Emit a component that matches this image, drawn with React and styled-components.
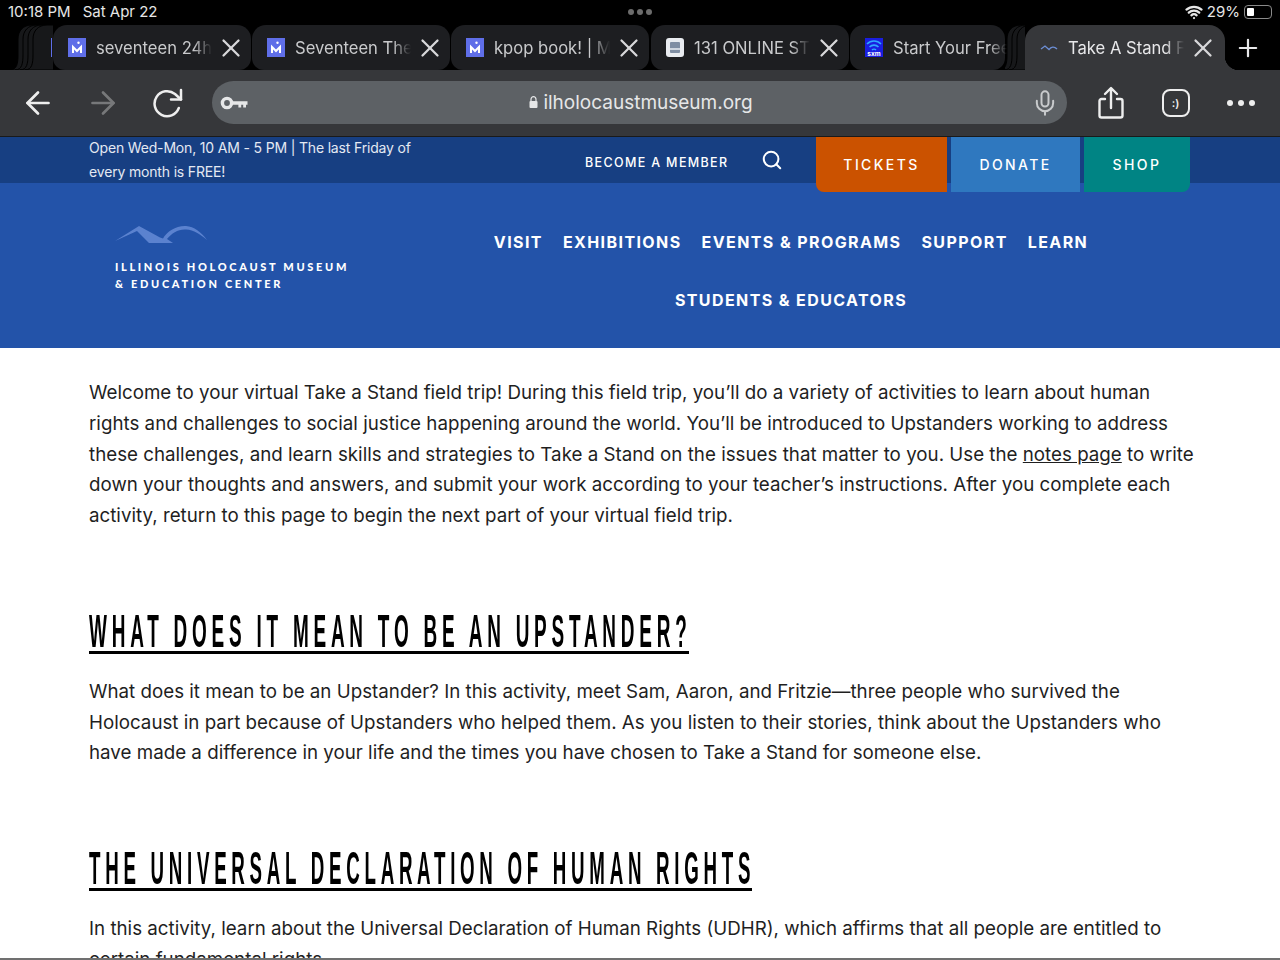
import React from 'react';
import styled, { createGlobalStyle } from 'styled-components';
import { X, Plus, ArrowLeft, ArrowRight, Mic, Search, Wifi } from 'lucide-react';

const GlobalStyle = createGlobalStyle`
  html, body {
    margin: 0;
    padding: 0;
    height: 960px;
    overflow: hidden;
    background: #fff;
  }
  * {
    box-sizing: border-box;
  }
`;

const Page = styled.div`
  width: 1280px;
  height: 960px;
  overflow: hidden;
  border-bottom: 2px solid #707070;
  font-family: 'Inter', 'Liberation Sans', sans-serif;
`;

const StatusBar = styled.div`
  display: grid;
  grid-template-columns: 1fr auto 1fr;
  align-items: center;
  height: 25px;
  padding: 0 8px 2px;
  background: #000;
  color: #e6e6e6;
  font-size: 15px;
`;

const Clock = styled.div`
  display: flex;
  gap: 12px;
`;

const Dots = styled.div`
  display: flex;
  gap: 3px;
`;

const Dot = styled.span`
  width: ${(p) => p.$size}px;
  height: ${(p) => p.$size}px;
  border-radius: 50%;
  background: ${(p) => p.$color};
`;

const StatusRight = styled.div`
  display: flex;
  align-items: center;
  justify-content: flex-end;
  gap: 4px;
`;

const Battery = styled.div`
  width: 28px;
  height: 14px;
  padding: 2px;
  border: 1px solid #8a8a8a;
  border-radius: 4px;

  &::before {
    content: '';
    display: block;
    width: 7px;
    height: 100%;
    background: #fff;
    border-radius: 1px;
  }
`;

const TabStrip = styled.div`
  display: flex;
  align-items: stretch;
  height: 45px;
  background: #000;
`;

const Tab = styled.div`
  position: relative;
  display: flex;
  align-items: center;
  flex: none;
  width: ${(p) => p.$width}px;
  margin-right: ${(p) => p.$gap || 0}px;
  padding-left: 15px;
  background: ${(p) => (p.$active ? '#36373a' : '#1d1e21')};
  border-radius: ${(p) => (p.$active ? '16px 16px 0 0' : '14px 14px 12px 12px')};
  color: ${(p) => (p.$active ? '#e8e8ea' : '#c9cacc')};

  ${(p) =>
    p.$active &&
    `
    &::after {
      content: '';
      position: absolute;
      left: 100%;
      bottom: 0;
      width: 14px;
      height: 14px;
      background: radial-gradient(circle at 100% 0, transparent 14px, #36373a 14.5px);
    }
  `}
`;

const Favicon = styled.span`
  display: flex;
  flex: none;
  align-items: center;
  justify-content: center;
  width: 18px;
  height: 19px;
  border-radius: ${(p) => p.$radius || 0}px;
  background: ${(p) => p.$bg || 'transparent'};
`;

const TabTitle = styled.span`
  flex: none;
  width: ${(p) => p.$width}px;
  margin-left: 10px;
  overflow: hidden;
  white-space: nowrap;
  font-size: 16.6px;
  -webkit-mask-image: linear-gradient(to right, #000 84%, transparent 100%);
  mask-image: linear-gradient(to right, #000 84%, transparent 100%);
`;

const CloseButton = styled(X)`
  flex: none;
  margin-left: 4px;
  color: #d8d8da;
`;

const PeekBar = styled.span`
  position: absolute;
  left: -2px;
  top: 13px;
  width: 1px;
  height: 19px;
  background: #5f6ee8;
`;

const NewTab = styled.div`
  display: flex;
  flex: 1;
  align-items: center;
  justify-content: center;
  padding-right: 10px;
  color: #e8e8ea;
`;

const Toolbar = styled.div`
  display: flex;
  align-items: center;
  height: 67px;
  padding-left: 5px;
  padding-bottom: 1px;
  background: #36373a;
  border-bottom: 1px solid #1a1a1a;
`;

const ToolButton = styled.div`
  display: flex;
  flex: none;
  align-items: center;
  justify-content: center;
  width: 65px;
  color: ${(p) => (p.$dim ? '#77787a' : '#eeeeee')};
`;

const UrlBar = styled.div`
  display: grid;
  grid-template-columns: 1fr auto 1fr;
  align-items: center;
  flex: none;
  width: 855px;
  height: 43px;
  margin: 0 11px 0 12px;
  padding: 0 8px;
  border-radius: 22px;
  background: #5d6165;
  color: #e6e7e8;
  font-size: 19px;
`;

const UrlText = styled.div`
  display: flex;
  align-items: center;
  gap: 5px;
  margin: -1px 0 0 3px;
`;

const MicSlot = styled.div`
  display: flex;
  justify-content: flex-end;
  color: #c9cbcd;
`;

const TabCount = styled.div`
  display: flex;
  align-items: center;
  justify-content: center;
  width: 28px;
  height: 28px;
  border: 2px solid #eee;
  border-radius: 8px;
  font-size: 11px;
  font-weight: 600;
`;

const MoreDots = styled.div`
  display: flex;
  gap: 5px;
`;

const TopBar = styled.div`
  position: relative;
  z-index: 1;
  display: flex;
  height: 46px;
  background: #173f82;
  color: #fff;
`;

const Hours = styled.div`
  width: 496px;
  margin-left: 89px;
  margin-top: -1px;
  font-size: 14px;
  letter-spacing: -0.17px;
  line-height: 24px;
  color: #e4e9f2;
`;

const MemberLink = styled.a`
  width: 176px;
  font-size: 12.5px;
  font-weight: 500;
  letter-spacing: 1.35px;
  line-height: 52px;
  white-space: nowrap;
`;

const SearchSlot = styled.div`
  display: flex;
  width: 55px;
  padding-top: 12px;
`;

const CtaButton = styled.a`
  display: flex;
  align-items: center;
  justify-content: center;
  flex: none;
  width: ${(p) => p.$width}px;
  height: 55px;
  margin-right: 4px;
  background: ${(p) => p.$bg};
  border-radius: ${(p) => p.$radius || '0'};
  font-size: 14px;
  font-weight: 500;
  letter-spacing: 2.4px;
`;

const SiteHeader = styled.header`
  display: flex;
  height: 165px;
  padding-left: 115px;
  background: #2353a9;
  color: #fff;
`;

const LogoBlock = styled.div`
  flex: none;
  width: 356px;
  padding-top: 42px;
`;

const LogoMark = styled.svg`
  display: block;
  width: 92px;
  height: 20px;
`;

const LogoText = styled.div`
  margin-top: 13px;
  font-family: 'Lato', 'Liberation Sans', sans-serif;
  font-size: 11px;
  font-weight: 900;
  letter-spacing: 2.68px;
  line-height: 17px;
  white-space: nowrap;
`;

const MainNav = styled.nav`
  display: flex;
  flex-wrap: wrap;
  align-content: flex-start;
  justify-content: center;
  column-gap: 20px;
  width: 640px;
  padding-top: 30px;
`;

const NavLink = styled.a`
  font-size: 16px;
  font-weight: 700;
  letter-spacing: 1.4px;
  line-height: 58px;
  white-space: nowrap;
`;

const Content = styled.main`
  padding: 30px 0 0 89px;
  background: #fff;
  color: #1f1f1f;
`;

const Para = styled.p`
  margin: 0;
  font-size: 18.75px;
  line-height: 30.75px;
  white-space: nowrap;

  a {
    color: inherit;
    text-decoration: underline;
  }
`;

const Heading = styled.h2`
  width: ${(p) => p.$width}px;
  height: 43px;
  margin: 79px 0 23px;
  border-bottom: 3px solid #000;
  font-family: 'Liberation Sans', sans-serif;
  font-size: 46px;
  font-weight: 700;
  line-height: 40px;
  white-space: nowrap;
  color: #000;

  span {
    display: block;
    transform: scaleX(${(p) => p.$squeeze});
    transform-origin: left center;
    letter-spacing: 11.6px;
  }
`;

const MediumFavicon = () => (
  <Favicon $bg="#5f6ee8">
    <svg width="12" height="13" viewBox="0 0 12 13" fill="none" stroke="#fff" strokeWidth="2">
      <path d="M2 12V6l4 4 4-4v6" />
      <circle cx="7.500" cy="1.800" r="1.200" fill="#fff" stroke="none" />
    </svg>
  </Favicon>
);

const ReloadIcon = () => (
  <svg width="30" height="30" viewBox="0 0 30 30" fill="none" stroke="#eee" strokeWidth="2.500" strokeLinecap="round" strokeLinejoin="round">
    <path d="M25.800 20a12.500 12.500 0 1 1-3.800-14l6 5.500" />
    <path d="M28 2v9.500H18" />
  </svg>
);

const ShareIcon = () => (
  <svg width="28" height="34" viewBox="0 0 28 34" fill="none" stroke="#eee" strokeWidth="2.400" strokeLinecap="round" strokeLinejoin="round">
    <path d="M8 13H4.500a2 2 0 0 0-2 2v14.500a2 2 0 0 0 2 2h19a2 2 0 0 0 2-2V15a2 2 0 0 0-2-2H20" />
    <path d="M14 22V2.500M8 8l6-6 6 6" />
  </svg>
);

const KeyIcon = () => (
  <svg width="28" height="14" viewBox="0 0 28 14" fill="none">
    <circle cx="7" cy="7" r="4.600" stroke="#e6e7e8" strokeWidth="3.400" />
    <path d="M12 5.200h15.500v3.600H26v2.600h-2.800V8.800h-2v2.600h-2.800V8.800H12z" fill="#e6e7e8" />
  </svg>
);

const LockIcon = () => (
  <svg width="9" height="12" viewBox="0 0 9 12">
    <path d="M2 5V3.200a2.500 2.500 0 0 1 5 0V5" fill="none" stroke="#e6e7e8" strokeWidth="1.200" />
    <rect x="0.500" y="5" width="8" height="7" rx="1" fill="#e6e7e8" />
  </svg>
);

// stacked tab edges behind the first tab and the active tab
const TabStack = ({ width, count, start }) => (
  <svg width={width} height="45" viewBox={`0 0 ${width} 45`} style={{ flex: 'none' }}>
    {Array.from({ length: count }).map((_, i) => {
      const x = start + i * 5;
      return (
        <path
          key={i}
          d={`M${x} 45 C${x + 7} 45 ${x + 8} 38 ${x + 8} 30 L${x + 8} 14 C${x + 8} 6 ${x + 13} 0 ${x + 22} 0 L${width + 20} 0 L${width + 20} 45 Z`}
          fill="#17181a"
          stroke="#000"
          strokeWidth="1"
        />
      );
    })}
  </svg>
);

const mediumTabs = [
  { title: 'seventeen 24h', gap: 1 },
  { title: 'Seventeen The', gap: 1 },
  { title: 'kpop book! | Me', gap: 2 },
];

const App = () => {
  return (
    <Page>
      <GlobalStyle />
      <StatusBar>
        <Clock>
          <span>10:18 PM</span>
          <span>Sat Apr 22</span>
        </Clock>
        <Dots>
          <Dot $size={6} $color="#6c6c6c" />
          <Dot $size={6} $color="#6c6c6c" />
          <Dot $size={6} $color="#6c6c6c" />
        </Dots>
        <StatusRight>
          <Wifi size={18} strokeWidth={3} />
          <span>29%</span>
          <Battery />
        </StatusRight>
      </StatusBar>

      <TabStrip>
        <TabStack width={53} count={4} start={10} />
        {mediumTabs.map((t, i) => (
          <Tab key={t.title} $width={198} $gap={t.gap}>
            {i === 0 && <PeekBar />}
            <MediumFavicon />
            <TabTitle $width={116}>{t.title}</TabTitle>
            <CloseButton size={30} strokeWidth={1.8} />
          </Tab>
        ))}
        <Tab $width={198} $gap={1}>
          <Favicon $bg="#e9ecf0" $radius={3}>
            <svg width="12" height="13" viewBox="0 0 12 13">
              <rect x="1" y="1" width="10" height="11" rx="1" fill="#7f8ea3" />
              <rect x="1" y="7" width="10" height="2" fill="#cfd6df" />
            </svg>
          </Favicon>
          <TabTitle $width={116}>131 ONLINE STO</TabTitle>
          <CloseButton size={30} strokeWidth={1.8} />
        </Tab>
        <Tab $width={155}>
          <Favicon $bg="#1a1ee0">
            <svg width="18" height="19" viewBox="0 0 18 19" fill="none" stroke="#2fa8ff" strokeWidth="1.600">
              <path d="M2 6c4-4 10-4 14 0M4.500 9c2.500-2.500 6.500-2.500 9 0M7 12c1-1 3-1 4 0" />
              <text x="9" y="18" textAnchor="middle" fill="#fff" stroke="none" fontSize="6.500" fontWeight="700">sxm</text>
            </svg>
          </Favicon>
          <TabTitle $width={114}>Start Your Free</TabTitle>
        </Tab>
        <TabStack width={20} count={3} start={-6} />
        <Tab $width={200} $active>
          <Favicon>
            <svg width="18" height="8" viewBox="0 0 18 8" fill="none" stroke="#6d8fd6" strokeWidth="1.300">
              <path d="M1 5l4-3 4 3.500C11 3 14 2 17 5" />
            </svg>
          </Favicon>
          <TabTitle $width={116}>Take A Stand Fi</TabTitle>
          <CloseButton size={30} strokeWidth={1.8} />
        </Tab>
        <NewTab>
          <Plus size={28} strokeWidth={1.9} />
        </NewTab>
      </TabStrip>

      <Toolbar>
        <ToolButton><ArrowLeft size={36} strokeWidth={1.8} /></ToolButton>
        <ToolButton $dim><ArrowRight size={36} strokeWidth={1.8} /></ToolButton>
        <ToolButton><ReloadIcon /></ToolButton>
        <UrlBar>
          <KeyIcon />
          <UrlText>
            <LockIcon />
            <span>ilholocaustmuseum.org</span>
          </UrlText>
          <MicSlot><Mic size={28} strokeWidth={1.7} /></MicSlot>
        </UrlBar>
        <ToolButton><ShareIcon /></ToolButton>
        <ToolButton><TabCount>:)</TabCount></ToolButton>
        <ToolButton>
          <MoreDots>
            <Dot $size={6} $color="#eee" />
            <Dot $size={6} $color="#eee" />
            <Dot $size={6} $color="#eee" />
          </MoreDots>
        </ToolButton>
      </Toolbar>

      <TopBar>
        <Hours>
          Open Wed-Mon, 10 AM - 5 PM | The last Friday of
          <br />
          every month is FREE!
        </Hours>
        <MemberLink>BECOME A MEMBER</MemberLink>
        <SearchSlot><Search size={22} strokeWidth={2.2} /></SearchSlot>
        <CtaButton $width={131} $bg="#cb5200" $radius="0 0 0 8px">TICKETS</CtaButton>
        <CtaButton $width={129} $bg="#2f78bf">DONATE</CtaButton>
        <CtaButton $width={106} $bg="#008484" $radius="0 0 8px 0">SHOP</CtaButton>
      </TopBar>

      <SiteHeader>
        <LogoBlock>
          <LogoMark viewBox="0 0 92 20">
            <path
              d="M0 16L24 1l21 11.500 3 1c4-7 13-13 23-12.500 8 .5 15 6 21 14-7-6-13-10-21-10.500-8-.5-14 3.500-19 9.500l6 4H34L22 6 0 16z"
              fill="#5b82cf"
            />
          </LogoMark>
          <LogoText>
            ILLINOIS HOLOCAUST MUSEUM
            <br />
            &amp; EDUCATION CENTER
          </LogoText>
        </LogoBlock>
        <MainNav>
          <NavLink>VISIT</NavLink>
          <NavLink>EXHIBITIONS</NavLink>
          <NavLink>EVENTS &amp; PROGRAMS</NavLink>
          <NavLink>SUPPORT</NavLink>
          <NavLink>LEARN</NavLink>
          <NavLink>STUDENTS &amp; EDUCATORS</NavLink>
        </MainNav>
      </SiteHeader>

      <Content>
        <Para>
          Welcome to your virtual Take a Stand field trip! During this field trip, you’ll do a variety of activities to learn about human
          <br />
          rights and challenges to social justice happening around the world. You’ll be introduced to Upstanders working to address
          <br />
          these challenges, and learn skills and strategies to Take a Stand on the issues that matter to you. Use the <a href="#">notes page</a> to write
          <br />
          down your thoughts and answers, and submit your work according to your teacher’s instructions. After you complete each
          <br />
          activity, return to this page to begin the next part of your virtual field trip.
        </Para>

        <Heading $width={600} $squeeze={0.412}>
          <span>WHAT DOES IT MEAN TO BE AN UPSTANDER?</span>
        </Heading>
        <Para>
          What does it mean to be an Upstander? In this activity, meet Sam, Aaron, and Fritzie—three people who survived the
          <br />
          Holocaust in part because of Upstanders who helped them. As you listen to their stories, think about the Upstanders who
          <br />
          have made a difference in your life and the times you have chosen to Take a Stand for someone else.
        </Para>

        <Heading $width={663} $squeeze={0.407}>
          <span>THE UNIVERSAL DECLARATION OF HUMAN RIGHTS</span>
        </Heading>
        <Para>
          In this activity, learn about the Universal Declaration of Human Rights (UDHR), which affirms that all people are entitled to
          <br />
          certain fundamental rights.
        </Para>
      </Content>
    </Page>
  );
};

export default App;
